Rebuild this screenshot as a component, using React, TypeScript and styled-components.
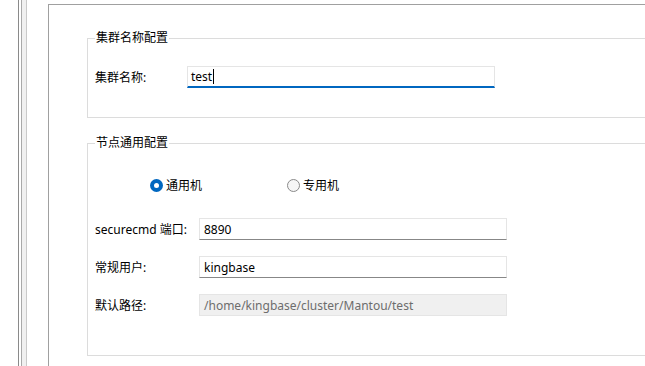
import React from "react";
import styled, { createGlobalStyle } from "styled-components";

const Global = createGlobalStyle`
  html, body { margin: 0; padding: 0; background: #ffffff; overflow: hidden; }
  body { font-family: "Noto Sans", "Noto Sans CJK SC", sans-serif; font-size: 12px; color: #1a1a1a; }
`;

const Page = styled.div`
  display: flex;
  width: 645px;
  height: 366px;
  overflow: hidden;
  background: #fff;
`;

const Sidebar = styled.div`
  width: 48px;
  flex: none;
  display: flex;
  padding-left: 18px;
  box-sizing: border-box;
`;

const OuterRail = styled.div`
  width: 0;
  border-left: 1px solid #8a8a8a;
  margin-right: 2px;
`;

const Splitter = styled.div`
  width: 4px;
  background: #f0f0f0;
  border-left: 1px solid #a9a9a9;
  border-right: 1px solid #c9c9c9;
`;

const Panel = styled.div`
  flex: 1;
  margin-top: 4px;
  border-top: 1px solid #a0a0a0;
  border-left: 1px solid #a0a0a0;
  padding-left: 38px;
  display: flex;
  flex-direction: column;
`;

const Group = styled.fieldset<{ $top: number; $padTop: number; $padBottom: number }>`
  margin: ${(p) => p.$top}px 0 0 0;
  border: 1px solid #dcdcdc;
  border-right: none;
  padding: ${(p) => p.$padTop}px 0 ${(p) => p.$padBottom}px 7px;
  display: flex;
  flex-direction: column;
  gap: 16px;
  min-width: 0;
`;

const Legend = styled.legend`
  padding: 0 1px;
  line-height: 16px;
  height: 16px;
  color: #000;
`;

const Row = styled.div<{ $labelWidth: number }>`
  display: grid;
  grid-template-columns: ${(p) => p.$labelWidth}px 308px;
  align-items: center;
`;

const Label = styled.span`
  color: #000;
  white-space: nowrap;
`;

const Field = styled.div<{ $state?: "focus" | "normal" | "disabled" }>`
  height: 22px;
  box-sizing: border-box;
  display: flex;
  align-items: center;
  padding-left: ${(p) => (p.$state === "focus" ? 3 : 4)}px;
  border: 1px solid #e5e5e5;
  border-bottom: ${(p) =>
    p.$state === "focus"
      ? "2px solid #0067c0"
      : p.$state === "disabled"
      ? "1px solid #e5e5e5"
      : "1px solid #878787"};
  background: ${(p) => (p.$state === "disabled" ? "#f0f0f0" : "#ffffff")};
  color: ${(p) => (p.$state === "disabled" ? "#6d6d6d" : "#000")};
  font-size: 12px;
  white-space: nowrap;
`;

const Caret = styled.span`
  display: inline-block;
  width: 1px;
  height: 15px;
  background: #000;
  margin-left: 1px;
`;

const RadioRow = styled.div`
  display: grid;
  grid-template-columns: 137px auto;
  padding-left: 55px;
  margin-bottom: 9px;
`;

const RadioItem = styled.label`
  display: flex;
  align-items: center;
  gap: 3px;
  height: 16px;
  color: #000;
`;

const RadioDot = styled.span<{ $checked?: boolean }>`
  width: 13px;
  height: 13px;
  box-sizing: border-box;
  border-radius: 50%;
  flex: none;
  display: flex;
  align-items: center;
  justify-content: center;
  background: ${(p) => (p.$checked ? "#0067c0" : "#f6f6f6")};
  border: ${(p) => (p.$checked ? "none" : "1px solid #8a8a8a")};
  &::after {
    content: "";
    width: 5px;
    height: 5px;
    border-radius: 50%;
    background: #fff;
    display: ${(p) => (p.$checked ? "block" : "none")};
  }
`;

export default function App() {
  return (
    <>
      <Global />
      <Page>
        <Sidebar>
          <OuterRail />
          <Splitter />
        </Sidebar>
        <Panel>
          <Group $top={25} $padTop={20} $padBottom={29}>
            <Legend>集群名称配置</Legend>
            <Row $labelWidth={92}>
              <Label>集群名称:</Label>
              <Field $state="focus">
                test
                <Caret />
              </Field>
            </Row>
          </Group>
          <Group $top={17} $padTop={26} $padBottom={39}>
            <Legend>节点通用配置</Legend>
            <RadioRow>
              <RadioItem>
                <RadioDot $checked />
                通用机
              </RadioItem>
              <RadioItem>
                <RadioDot />
                专用机
              </RadioItem>
            </RadioRow>
            <Row $labelWidth={104}>
              <Label>securecmd 端口:</Label>
              <Field>8890</Field>
            </Row>
            <Row $labelWidth={104}>
              <Label>常规用户:</Label>
              <Field>kingbase</Field>
            </Row>
            <Row $labelWidth={104}>
              <Label>默认路径:</Label>
              <Field $state="disabled">/home/kingbase/cluster/Mantou/test</Field>
            </Row>
          </Group>
        </Panel>
      </Page>
    </>
  );
}
